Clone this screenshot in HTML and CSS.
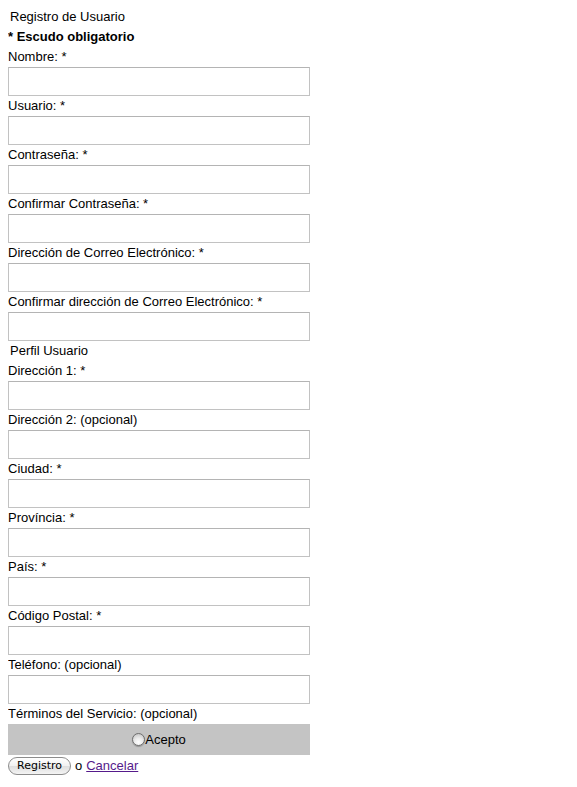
FILE: index.html
```html
<!DOCTYPE html>
<html>
<head>
  <title>Registro de Usuario</title>
  <link rel="stylesheet" href="styles.css">
</head>
<body>
  <form class="register">
    <div class="caption">Registro de Usuario</div>
    <div class="required-note">* Escudo obligatorio</div>

    <label for="nombre">Nombre: *</label>
    <input type="text" id="nombre">

    <label for="usuario">Usuario: *</label>
    <input type="text" id="usuario">

    <label for="pass">Contraseña: *</label>
    <input type="password" id="pass">

    <label for="pass2">Confirmar Contraseña: *</label>
    <input type="password" id="pass2">

    <label for="email">Dirección de Correo Electrónico: *</label>
    <input type="text" id="email">

    <label for="email2">Confirmar dirección de Correo Electrónico: *</label>
    <input type="text" id="email2">

    <!-- Perfil -->
    <div class="caption">Perfil Usuario</div>

    <label for="dir1">Dirección 1: *</label>
    <input type="text" id="dir1">

    <label for="dir2">Dirección 2: (opcional)</label>
    <input type="text" id="dir2">

    <label for="ciudad">Ciudad: *</label>
    <input type="text" id="ciudad">

    <label for="provincia">Província: *</label>
    <input type="text" id="provincia">

    <label for="pais">País: *</label>
    <input type="text" id="pais">

    <label for="cp">Código Postal: *</label>
    <input type="text" id="cp">

    <label for="tel">Teléfono: (opcional)</label>
    <input type="text" id="tel">

    <label>Términos del Servicio: (opcional)</label>
    <div class="terms">
      <input type="radio" id="acepto" class="radio"><label for="acepto" class="inline">Acepto</label>
    </div>

    <div class="actions">
      <button type="button" class="btn">Registro</button>
      <span class="or">o</span>
      <a href="#" class="cancel">Cancelar</a>
    </div>
  </form>
</body>
</html>
```

FILE: styles.css
```css
body {
    margin: 7px 8px 8px;
    font-family: "Liberation Sans", Arial, sans-serif;
    font-size: 13px;
    line-height: 20px;
    color: #000;
    background-color: #fff;
}

.register {
    width: 302px;
}

.caption {
    padding-left: 2px;
}

.required-note {
    font-weight: bold;
}

label {
    display: block;
}

input[type="text"], input[type="password"] {
    display: block;
    box-sizing: border-box;
    width: 302px;
    height: 29px;
    margin: 0;
    padding: 2px 4px;
    border: 1px solid #c2c2c2;
    border-top-color: #b4b4b4;
    background-color: #fff;
    font-family: inherit;
    font-size: 13px;
}

.terms {
    display: flex;
    justify-content: center;
    align-items: center;
    height: 31px;
    background-color: #c4c4c4;
}

.radio {
    appearance: none;
    -webkit-appearance: none;
    box-sizing: border-box;
    width: 13px;
    height: 13px;
    margin: 0;
    border: 1px solid #6f6f6f;
    border-radius: 50%;
    background: radial-gradient(circle at 50% 75%, #ffffff 0%, #ececec 40%, #bdbdbd 100%);
    box-shadow: 0 1px 1px rgba(0, 0, 0, 0.25);
}

label.inline {
    display: inline;
}

.actions {
    display: flex;
    align-items: center;
    height: 22px;
}

.btn {
    box-sizing: border-box;
    width: 63px;
    height: 18px;
    padding: 0;
    border: 1px solid #8c8c8c;
    border-radius: 9px;
    background: linear-gradient(#ffffff, #f1f1f1 50%, #dedede 51%, #f4f4f4);
    color: #000;
    font-family: "DejaVu Sans", sans-serif;
    font-size: 11px;
    line-height: 16px;
    cursor: pointer;
}

.or {
    margin-left: 4px;
    margin-right: 4px;
}

.cancel {
    color: #551a8b;
}
```
